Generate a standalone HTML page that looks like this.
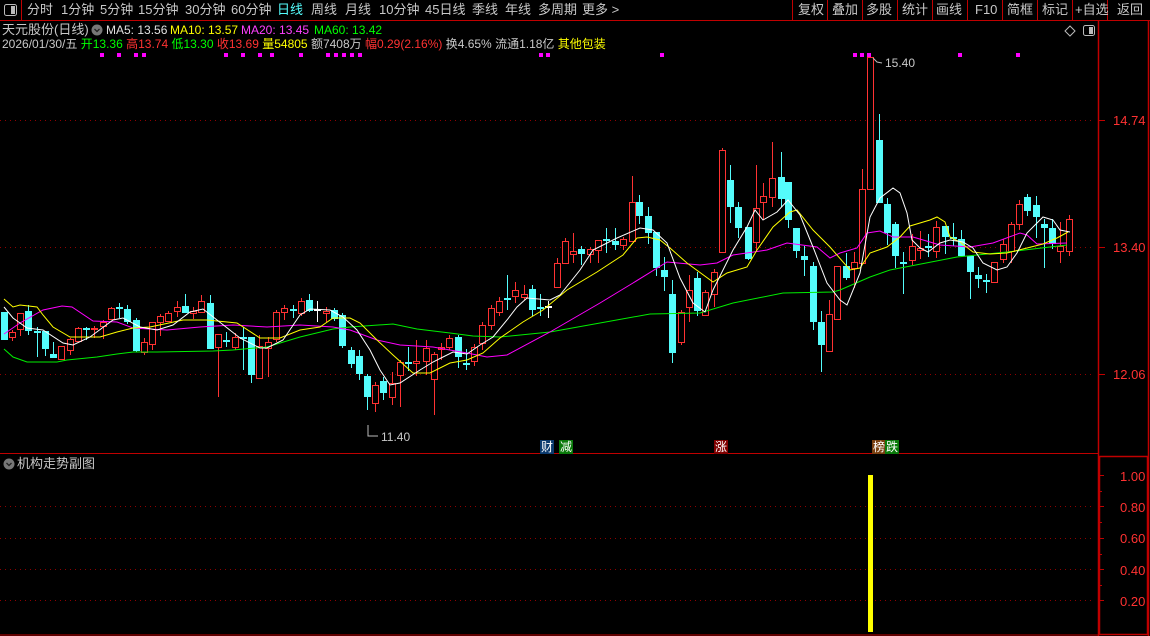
<!DOCTYPE html>
<html><head><meta charset="utf-8">
<style>
html,body{margin:0;padding:0;background:#000;}
body{width:1150px;height:636px;position:relative;overflow:hidden;font-family:"Liberation Sans","Noto Sans CJK SC",sans-serif;font-size:13px;color:#c8c8c8;}
.t{position:absolute;white-space:nowrap;line-height:16px;}
.w{color:#e0e0e0}.y{color:#ffff00}.m{color:#ff40ff}.g{color:#00ff00}.r{color:#ff3232}.c{color:#54fcfc}.gr{color:#c8c8c8}
svg{position:absolute;left:0;top:0;}
.tag{position:absolute;font-size:12px;line-height:14px;color:#fff;padding:0 1px;}
</style></head><body>
<svg id="s" width="1150" height="636" xmlns="http://www.w3.org/2000/svg">
<!-- frames -->
<line x1="0" y1="20.5" x2="1150" y2="20.5" stroke="#c00000"/>
<line x1="21.5" y1="0" x2="21.5" y2="20" stroke="#c00000"/>
<g stroke="#c00000">
<line x1="792.5" y1="0" x2="792.5" y2="20"/><line x1="827.5" y1="0" x2="827.5" y2="20"/><line x1="862.5" y1="0" x2="862.5" y2="20"/><line x1="897.5" y1="0" x2="897.5" y2="20"/><line x1="932.5" y1="0" x2="932.5" y2="20"/><line x1="967.5" y1="0" x2="967.5" y2="20"/><line x1="1002.5" y1="0" x2="1002.5" y2="20"/><line x1="1037.5" y1="0" x2="1037.5" y2="20"/><line x1="1072.5" y1="0" x2="1072.5" y2="20"/><line x1="1107.5" y1="0" x2="1107.5" y2="20"/>
</g>
<rect x="4.5" y="4.5" width="12" height="11" rx="2" fill="none" stroke="#bbb"/><rect x="11" y="6" width="4" height="8" fill="#bbb"/>
<line x1="1098.5" y1="21" x2="1098.5" y2="636" stroke="#c00000" stroke-width="1.5"/>
<line x1="1148.5" y1="21" x2="1148.5" y2="636" stroke="#c00000" stroke-width="1.5"/>
<line x1="0" y1="453.5" x2="1098" y2="453.5" stroke="#c00000"/>
<rect x="1099.5" y="456.5" width="48" height="178" fill="none" stroke="#c00000" stroke-width="1.5"/>
<line x1="0" y1="635" x2="1098" y2="635" stroke="#c00000"/>
<!-- icons -->
<path d="M1070 26 L1075 31 L1070 36 L1065 31 Z" fill="none" stroke="#bbb"/>
<rect x="1083.5" y="25.5" width="11" height="10" rx="2" fill="none" stroke="#bbb"/><rect x="1089" y="27" width="4" height="7" fill="#bbb"/>
<circle cx="97" cy="30" r="5.5" fill="#777"/><path d="M94.5 29 L97 31.5 L99.5 29" stroke="#222" fill="none" stroke-width="1.3"/>
<circle cx="9" cy="464" r="5.5" fill="#777"/><path d="M6.5 463 L9 465.5 L11.5 463" stroke="#222" fill="none" stroke-width="1.3"/>
<!-- grid -->
<g stroke="#900000" stroke-dasharray="1,4">
<line x1="0" y1="120.5" x2="1092" y2="120.5"/><line x1="0" y1="247.5" x2="1092" y2="247.5"/><line x1="0" y1="374.5" x2="1092" y2="374.5"/>
<line x1="0" y1="506.5" x2="1092" y2="506.5"/><line x1="0" y1="538.5" x2="1092" y2="538.5"/><line x1="0" y1="569.5" x2="1092" y2="569.5"/><line x1="0" y1="600.5" x2="1092" y2="600.5"/>
</g>
<g stroke="#c00000">
<line x1="1098" y1="120.5" x2="1105" y2="120.5"/><line x1="1098" y1="247.5" x2="1105" y2="247.5"/><line x1="1098" y1="374.5" x2="1105" y2="374.5"/>
<line x1="1100" y1="475.5" x2="1104" y2="475.5"/><line x1="1100" y1="506.5" x2="1104" y2="506.5"/><line x1="1100" y1="538.5" x2="1104" y2="538.5"/><line x1="1100" y1="569.5" x2="1104" y2="569.5"/><line x1="1100" y1="600.5" x2="1104" y2="600.5"/>
<line x1="1100" y1="491.5" x2="1102" y2="491.5"/><line x1="1100" y1="522.5" x2="1102" y2="522.5"/><line x1="1100" y1="554.5" x2="1102" y2="554.5"/><line x1="1100" y1="585.5" x2="1102" y2="585.5"/>
</g>
<g font-family="Liberation Sans,sans-serif" font-size="13" fill="#ff3232">
<text x="1113" y="125">14.74</text><text x="1113" y="252">13.40</text><text x="1113" y="379">12.06</text>
<text x="1120" y="481">1.00</text><text x="1120" y="512">0.80</text><text x="1120" y="543">0.60</text><text x="1120" y="575">0.40</text><text x="1120" y="606">0.20</text>
</g>
<rect x="868" y="475" width="5" height="157" fill="#ffff00"/>
<g id="cd"></g>
<g fill="none" stroke-width="1">
<polyline id="l60" stroke="#00ee00" points="4,349 13,357 27,362 57,362 67,360 97,357 117,354 133,352 157,352 213,351 233,350 267,347 300,337 333,329 350,327 393,324 417,329 450,333 473,336 500,337 550,332 600,323 650,314 700,313 733,303 783,293 833,292 840,290 870,277 890,270 957,257 1007,252 1067,245"/>
<polyline stroke="#ff00ff" points="4,334 20,323 43,310 62,306 72,307 93,321 117,322 133,328 167,330 200,327 233,325 267,327 300,325 333,327 350,330 377,340 400,345 433,347 467,353 487,357 507,355 550,332 600,303 633,283 667,262 700,265 717,263 733,255 767,250 787,243 817,247 830,258 840,253 857,248 867,233 880,231 893,237 913,237 940,245 970,247 993,243 1020,233 1027,235 1037,244 1067,243"/>
<polyline stroke="#ffff00" points="4,299 13,307 20,305 37,307 43,315 53,327 70,337 100,337 117,332 133,328 150,327 183,320 207,320 237,323 260,338 280,338 300,330 320,327 333,318 350,318 360,323 377,340 393,355 413,373 430,373 450,363 467,360 483,353 500,338 523,322 543,310 567,290 597,272 623,255 637,238 647,237 660,240 670,248 687,263 713,282 727,273 747,267 757,250 773,227 790,212 797,210 813,230 830,247 850,270 860,268 870,253 887,247 900,237 910,226 930,220 937,217 945,222 950,237 960,242 973,252 990,254 1007,253 1027,248 1043,244 1057,238 1068,232"/>
<polyline stroke="#ffffff" points="4,307 13,318 27,328 43,330 63,343 73,345 90,337 113,320 123,318 140,327 157,330 173,325 190,312 203,309 217,320 240,338 260,348 267,348 283,340 300,315 310,309 330,310 343,317 357,330 370,350 380,370 390,385 400,383 420,370 433,362 443,357 453,352 467,354 480,345 493,337 507,320 517,307 527,298 550,300 560,295 580,270 593,250 617,238 640,228 653,230 667,243 680,278 693,303 705,312 713,290 733,250 747,227 755,210 763,220 777,212 788,200 800,215 813,247 827,283 840,300 847,305 860,273 870,217 880,198 893,188 900,193 907,213 912,240 920,248 928,252 940,243 950,240 963,242 973,248 983,263 997,270 1007,267 1017,253 1027,233 1043,217 1053,220 1060,230 1070,232"/>
</g>
<g fill="#ff00ff" id="dots"></g>
<!-- annotations -->
<path d="M873 58 L877 62 L882 63" stroke="#bbb" fill="none"/>
<text x="885" y="67" font-size="12" fill="#c8c8c8" font-family="Liberation Sans,sans-serif">15.40</text>
<path d="M368 425 L368 436 L378 436" stroke="#bbb" fill="none"/>
<text x="381" y="441" font-size="12" fill="#c8c8c8" font-family="Liberation Sans,sans-serif">11.40</text>
</svg>
<script>
var D=[
"c 4 312 340 312 340","r 12 332 337 330 341","r 20 313 329 313 336","c 28 311 331 305 335","c 37 331 333 327 357","c 45 331 349 331 356","c 53 354 358 342 358","r 61 346 359 346 360","r 70 339 350 338 355","r 78 328 341 327 341","c 86 328 329 327 340","r 94 328 329 326 338","r 103 322 326 320 339","r 111 308 319 307 320","c 119 307 308 303 318","c 127 309 322 305 324","c 136 320 351 318 352","r 144 342 352 338 355","r 152 322 344 322 350","r 160 316 322 314 336","r 168 313 321 311 321","r 177 307 311 301 317","c 185 306 313 294 313","r 193 311 313 307 319","r 201 301 312 295 313","c 210 303 349 295 349","r 218 334 347 334 397","c 226 340 341 332 347","r 235 337 347 333 350","c 243 337 339 327 370","c 251 337 375 337 383","r 259 346 378 335 378","r 268 342 348 337 377","r 276 312 339 310 342","r 284 308 312 305 320","c 293 309 310 305 318","r 301 301 313 298 316","c 309 300 311 294 312","w 317 309 310 301 322","r 326 311 313 307 322","c 334 310 319 308 321","c 342 315 346 313 348","c 351 350 364 347 368","c 359 356 374 350 380","c 367 376 397 374 410","r 375 385 403 382 412","c 383 381 393 377 400","r 392 383 397 372 405","r 400 362 375 360 407","c 408 362 363 347 371","r 416 361 363 340 376","r 426 348 361 340 375","r 434 354 379 352 415","r 441 347 349 343 360","r 449 338 347 335 350","c 458 337 357 335 368","c 466 363 364 349 370","r 474 347 361 344 366","r 482 325 343 322 350","r 491 308 325 305 330","r 499 301 312 297 316","c 507 298 300 275 310","r 515 290 296 282 303","r 524 294 297 285 300","c 532 289 310 285 316","c 540 307 308 294 316","w 548 306 307 301 318","r 557 263 287 258 288","r 565 241 263 238 264","r 573 251 254 233 263","c 581 249 254 246 265","r 590 249 254 247 263","r 598 240 250 240 263","c 606 239 241 228 253","c 615 241 245 228 250","r 623 239 245 237 250","r 632 202 241 176 241","c 639 202 216 195 224","c 648 216 233 207 244","c 656 232 268 232 276","c 664 270 277 257 291","c 672 294 353 280 363","r 681 312 342 310 345","r 689 290 307 275 322","c 697 278 311 272 316","r 705 292 315 290 316","r 714 272 294 269 307","r 722 150 252 148 252","c 730 180 207 165 223","c 738 207 228 202 238","c 748 227 259 227 260","r 756 208 242 165 251","r 763 196 202 183 220","r 772 178 197 142 207","c 781 177 199 152 207","c 788 182 220 182 228","c 796 228 251 228 258","c 804 256 260 246 276","c 813 266 322 262 330","c 821 322 345 311 372","r 829 314 351 300 351","r 837 266 319 266 320","c 846 266 278 253 280","r 854 262 268 252 288","r 862 189 263 169 263","r 870 57 189 57 189","c 879 140 203 114 203","c 887 204 233 198 245","c 895 224 256 222 268","c 903 262 263 252 294","r 912 246 260 234 265","r 920 248 250 231 259","c 928 246 248 234 257","r 936 227 251 221 258","c 945 226 237 226 254","c 953 237 239 223 246","c 961 239 256 230 256","c 970 256 272 256 299","c 978 275 279 267 288","c 986 280 281 274 293","r 994 262 282 262 282","r 1003 244 259 239 263","r 1011 224 251 222 263","r 1019 204 224 200 230","c 1027 197 211 194 216","c 1036 205 217 196 238","c 1044 224 228 219 268","c 1052 228 244 219 249","r 1060 246 251 222 263","r 1069 219 251 215 256"];
var ns="http://www.w3.org/2000/svg",g=document.getElementById("cd"),h="";
D.forEach(function(s){var a=s.split(" "),t=a[0],x=+a[1],o=+a[2],c=+a[3],hi=+a[4],lo=+a[5];
var col=t=="r"?"#ff3232":(t=="c"?"#54fcfc":"#ffffff");
h+='<line x1="'+(x+.5)+'" y1="'+hi+'" x2="'+(x+.5)+'" y2="'+lo+'" stroke="'+col+'"/>';
if(t=="r"){h+='<rect x="'+(x-2.5)+'" y="'+(o+.5)+'" width="6" height="'+Math.max(1,c-o)+'" fill="#000" stroke="'+col+'"/>';}
else{h+='<rect x="'+(x-3)+'" y="'+o+'" width="7" height="'+Math.max(2,c-o)+'" fill="'+col+'"/>';}
});
g.innerHTML=h;
var dx=[102,119,136,144,226,243,260,272,301,328,336,344,352,360,541,548,662,855,862,869,960,1018],dh="";
dx.forEach(function(x){dh+='<rect x="'+(x-2)+'" y="53" width="4" height="4"/>';});
document.getElementById("dots").innerHTML=dh;
</script>
<!-- top bar -->
<span class="t gr" style="left:27px;top:2px">分时</span>
<span class="t gr" style="left:61px;top:2px">1分钟</span>
<span class="t gr" style="left:100px;top:2px">5分钟</span>
<span class="t gr" style="left:138px;top:2px">15分钟</span>
<span class="t gr" style="left:185px;top:2px">30分钟</span>
<span class="t gr" style="left:231px;top:2px">60分钟</span>
<span class="t c" style="left:277px;top:2px">日线</span>
<span class="t gr" style="left:311px;top:2px">周线</span>
<span class="t gr" style="left:345px;top:2px">月线</span>
<span class="t gr" style="left:379px;top:2px">10分钟</span>
<span class="t gr" style="left:425px;top:2px">45日线</span>
<span class="t gr" style="left:472px;top:2px">季线</span>
<span class="t gr" style="left:505px;top:2px">年线</span>
<span class="t gr" style="left:538px;top:2px">多周期</span>
<span class="t gr" style="left:582px;top:2px">更多 &gt;</span>
<span class="t gr" style="left:798px;top:2px">复权</span>
<span class="t gr" style="left:832px;top:2px">叠加</span>
<span class="t gr" style="left:866px;top:2px">多股</span>
<span class="t gr" style="left:902px;top:2px">统计</span>
<span class="t gr" style="left:936px;top:2px">画线</span>
<span class="t gr" style="left:975px;top:2px">F10</span>
<span class="t gr" style="left:1007px;top:2px">简框</span>
<span class="t gr" style="left:1042px;top:2px">标记</span>
<span class="t gr" style="left:1075px;top:2px">+自选</span>
<span class="t gr" style="left:1117px;top:2px">返回</span>
<!-- info rows -->
<span class="t gr" style="left:2px;top:22px;font-size:13px">天元股份(日线)</span>
<span class="t w" style="left:106px;top:22px;font-size:12px">MA5: 13.56</span>
<span class="t y" style="left:170px;top:22px;font-size:12px">MA10: 13.57</span>
<span class="t m" style="left:241px;top:22px;font-size:12px">MA20: 13.45</span>
<span class="t g" style="left:314px;top:22px;font-size:12px">MA60: 13.42</span>
<span class="t" style="left:2px;top:36px;font-size:12px"><span class="gr">2026/01/30/五 </span><span class="g">开13.36 </span><span class="r">高13.74 </span><span class="g">低13.30 </span><span class="r">收13.69 </span><span class="y">量54805 </span><span class="gr">额7408万 </span><span class="r">幅0.29(2.16%) </span><span class="gr">换4.65% 流通1.18亿 </span><span class="y">其他包装</span></span>
<!-- bottom tags -->
<span class="tag" style="left:540px;top:440px;background:#0b3a6e">财</span>
<span class="tag" style="left:559px;top:440px;background:#0a7a0a">减</span>
<span class="tag" style="left:714px;top:440px;background:#800000">涨</span>
<span class="tag" style="left:872px;top:440px;background:#7a4010">榜</span><span class="tag" style="left:885px;top:440px;background:#0a7a0a">跌</span>
<span class="t gr" style="left:17px;top:456px;font-size:13px">机构走势副图</span>
</body></html>
